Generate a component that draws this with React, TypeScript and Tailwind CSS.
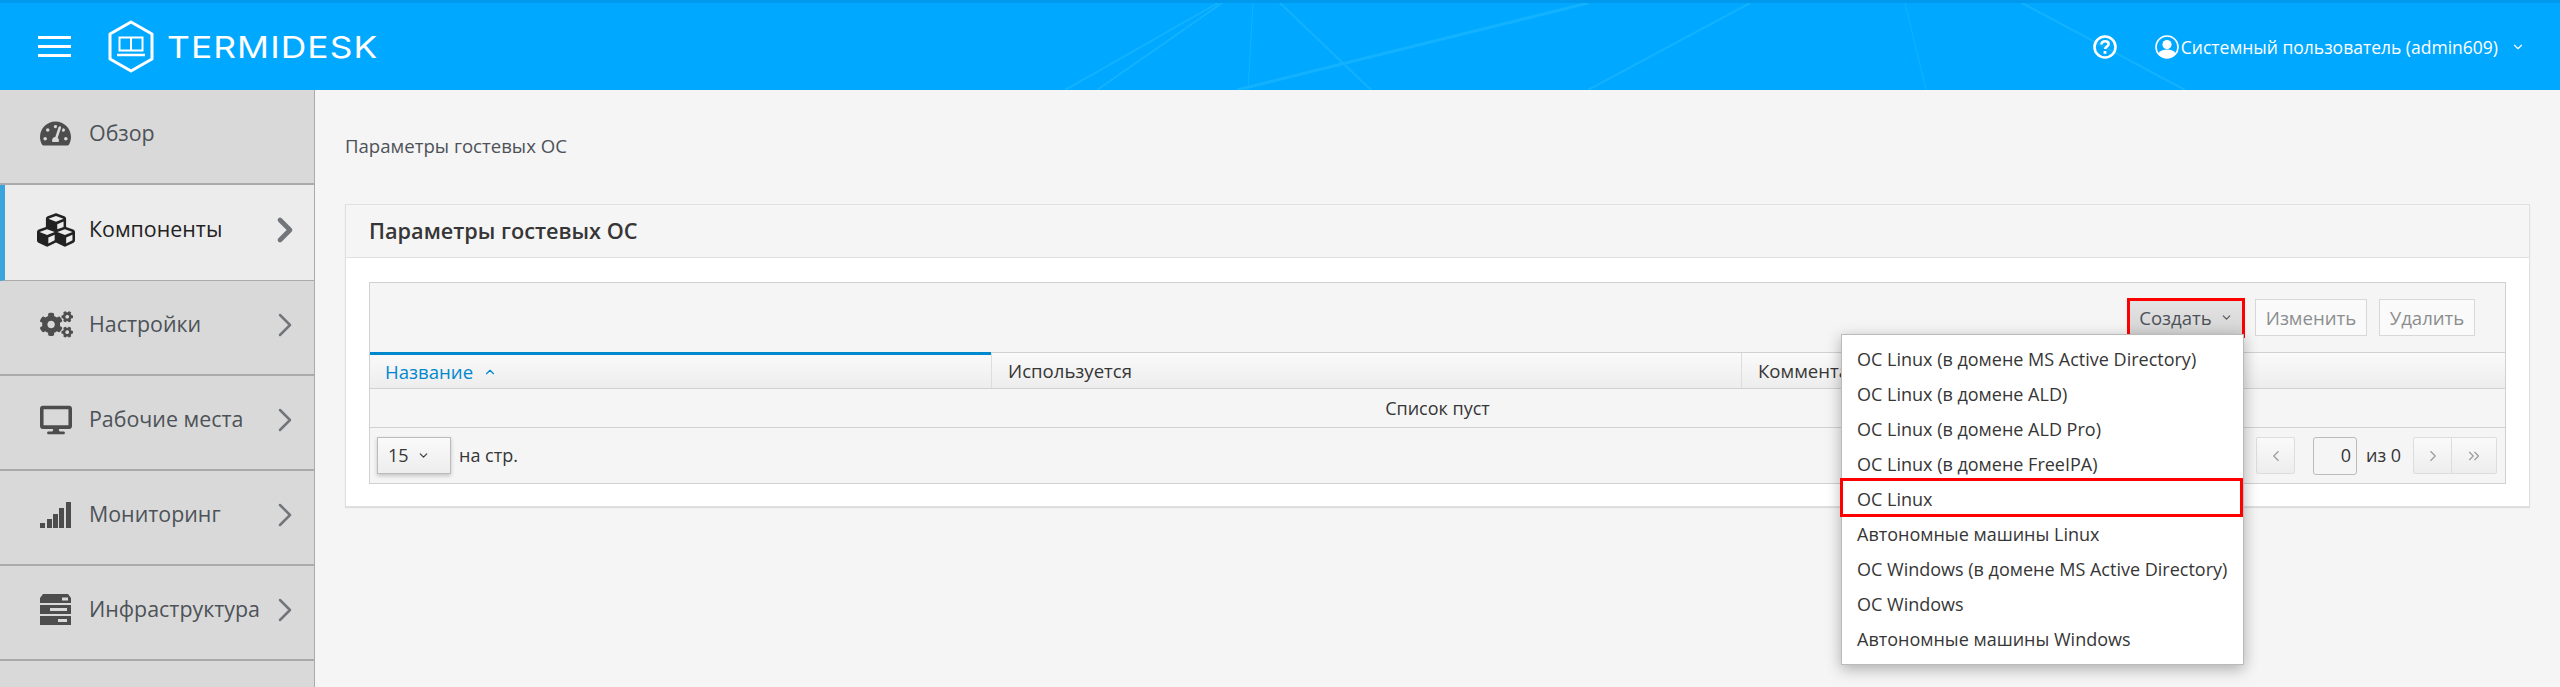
import React from 'react';
import { FaCogs, FaCubes, FaDesktop, FaTachometerAlt } from 'react-icons/fa';
import { ChevronDown, ChevronLeft, ChevronRight, ChevronUp, ChevronsRight } from 'lucide-react';

const SignalIcon = () => (
  <svg width="31" height="26" viewBox="0 0 31 26" fill="currentColor">
    <rect x="0" y="21" width="5" height="5" />
    <rect x="7" y="17" width="5" height="9" />
    <rect x="13" y="12" width="5" height="14" />
    <rect x="19" y="6" width="5" height="20" />
    <rect x="26" y="0" width="5" height="26" />
  </svg>
);

const ServerIcon = () => (
  <svg width="31" height="31" viewBox="0 0 31 31" fill="currentColor">
    <path d="M3 0h25l3 4v5H0V4z" />
    <path fillRule="evenodd" d="M0 11h31v9H0zM10 14v3h17v-3z" />
    <path fillRule="evenodd" d="M0 22h31v9H0zM18 25v3h9v-3z" />
    <rect x="22" y="3.5" width="6" height="3" fill="#d9d9d9" />
  </svg>
);

const Logo = () => (
  <svg width="48" height="53" viewBox="0 0 48 53" fill="none" stroke="white">
    <path d="M24 2 L45 14 V39 L24 51 L3 39 V14 Z" strokeWidth="3" strokeLinejoin="round" />
    <rect x="12.5" y="17.5" width="23" height="13" strokeWidth="2" />
    <path d="M24 17v13" strokeWidth="2" />
    <path d="M10 35h28" strokeWidth="2.5" />
  </svg>
);

const UserIcon = () => (
  <svg width="24" height="24" viewBox="0 0 24 24">
    <circle cx="12" cy="12" r="11" fill="none" stroke="white" strokeWidth="1.6" />
    <circle cx="12" cy="9.5" r="4.6" fill="white" />
    <path d="M3.5 18.5c1.5-3 4.5-4 8.5-4s7 1 8.5 4C18.5 21.5 15.5 23 12 23s-6.500-1.500-8.500-4.500z" fill="white" />
  </svg>
);

const HelpIcon = () => (
  <svg width="24" height="24" viewBox="0 0 24 24" fill="none" stroke="white">
    <circle cx="12" cy="12" r="10.500" strokeWidth="2.600" />
    <path d="M8.500 9.500c0-2.200 1.500-3.300 3.600-3.300s3.500 1.100 3.500 2.900c0 2.600-3.500 2.500-3.500 5" strokeWidth="2.600" />
    <rect x="10.600" y="16" width="2.800" height="2.800" fill="white" stroke="none" />
  </svg>
);

const navItems = [
  { label: 'Обзор', icon: <FaTachometerAlt size={31} />, arrow: false },
  { label: 'Компоненты', icon: <FaCubes size={38} />, arrow: true, active: true },
  { label: 'Настройки', icon: <FaCogs size={33} />, arrow: true },
  { label: 'Рабочие места', icon: <FaDesktop size={32} />, arrow: true },
  { label: 'Мониторинг', icon: <SignalIcon />, arrow: true },
  { label: 'Инфраструктура', icon: <ServerIcon />, arrow: true },
];

const menuItems = [
  'ОС Linux (в домене MS Active Directory)',
  'ОС Linux (в домене ALD)',
  'ОС Linux (в домене ALD Pro)',
  'ОС Linux (в домене FreeIPA)',
  'ОС Linux',
  'Автономные машины Linux',
  'ОС Windows (в домене MS Active Directory)',
  'ОС Windows',
  'Автономные машины Windows',
];

const Header = () => (
  <header className="relative h-[90px] shrink-0 overflow-hidden border-t-[3px] border-[#0099ee] bg-[#00a8ff] text-white">
    <svg className="absolute inset-0" width="2560" height="87" fill="none" stroke="#12b2ff" strokeWidth="2">
      <path d="M1218 0L1065 87M1222 0L1097 87" />
      <path d="M1253 0L1248 87" strokeWidth="1" />
      <path d="M1280 0L1371 87" />
      <path d="M1588 0L1237 87" strokeWidth="3" />
      <path d="M1750 0L1588 87" />
      <path d="M1905 0L1926 87" strokeWidth="1" />
      <path d="M2022 0L2185 87" />
    </svg>
    <div className="relative flex h-full items-center pl-[38px] pr-[35px]">
      <div className="mr-[36px] flex w-[33px] flex-col gap-[6px]">
        <div className="h-[3px] bg-white" />
        <div className="h-[3px] bg-white" />
        <div className="h-[3px] bg-white" />
      </div>
      <Logo />
      <span className="ml-[12px] origin-left scale-x-[1.18] font-['Inter'] text-[30px] leading-none tracking-[0.9px]">TERMIDESK</span>
      <div className="ml-auto flex items-center">
        <HelpIcon />
        <div className="ml-[38px]"><UserIcon /></div>
        <span className="ml-[2px] text-[17.5px] leading-[28px]">Системный пользователь (admin609)</span>
        <ChevronDown className="ml-[13px]" size={14} />
      </div>
    </div>
  </header>
);

const Sidebar = () => (
  <nav className="w-[315px] shrink-0 border-r border-[#aaaaaa] bg-[#d9d9d9]">
    {navItems.map((item) => (
      <div
        key={item.label}
        className={
          item.active
            ? 'flex h-[96px] items-center border-b border-[#aaaaaa] border-l-[5px] border-l-[#39a5dc] bg-[#ececec] pb-[6px] pl-[32px] pr-[9px] text-[#222222]'
            : 'flex h-[95px] items-center border-b-2 border-[#aaaaaa] pb-[6px] pl-[40px] pr-[9px] text-[#4d5258]'
        }
      >
        <div className={item.active ? 'flex w-[52px] justify-start text-[#222222]' : 'flex w-[49px] justify-start text-[#4d4d4d]'}>{item.icon}</div>
        <span className={item.active ? 'text-[21.4px] font-medium' : 'text-[21.4px]'}>{item.label}</span>
        {item.arrow && (
          <ChevronRight className="ml-auto text-[#72767b]" size={40} strokeWidth={item.active ? 2.800 : 1.500} />
        )}
      </div>
    ))}
  </nav>
);

const Dropdown = () => (
  <div className="absolute left-[1471px] top-[-19px] z-10 w-[403px] border border-[#bbbbbb] bg-white py-[7px] text-[18px] text-[#363636] shadow-[0_4px_14px_rgba(0,0,0,0.3)]">
    {menuItems.map((item) => (
      <div key={item} className="relative flex h-[35px] items-center whitespace-nowrap pl-[15px]">
        {item}
        {item === 'ОС Linux' && (
          <span className="absolute -left-[2px] -top-[4px] bottom-0 right-0 border-[3px] border-[#ff0000]" />
        )}
      </div>
    ))}
  </div>
);

const Toolbar = () => (
  <div className="relative flex h-[69px] items-center justify-end pr-[30px] text-[18.6px]">
    <button className="flex h-[40px] w-[118px] items-center justify-center gap-[8px] border-[3px] border-[#ff0000] bg-gradient-to-b from-[#e4e4e4] to-[#d4d4d4] font-medium text-[#4d5258]">
      Создать <ChevronDown size={13} />
    </button>
    <button className="ml-[10px] h-[37px] w-[112px] border border-[#d8d8d8] bg-[#fafafa] text-[#8b8d8f]">Изменить</button>
    <button className="ml-[12px] h-[37px] w-[96px] border border-[#d8d8d8] bg-[#fafafa] text-[#8b8d8f]">Удалить</button>
  </div>
);

const TableHead = () => (
  <div className="flex h-[37px] border-y border-[#d1d1d1] bg-gradient-to-b from-[#fafafa] to-[#ededed] text-[18.6px] text-[#363636]">
    <div className="-mt-px flex w-[621px] items-center gap-[10px] border-t-[3px] border-[#0088ce] pl-[15px] text-[#0088ce]">
      Название <ChevronUp size={14} />
    </div>
    <div className="flex w-[750px] items-center border-l border-[#dddddd] pl-[16px]">Используется</div>
    <div className="flex flex-1 items-center border-l border-[#dddddd] pl-[16px]">Комментарий</div>
  </div>
);

const Pagination = () => (
  <div className="flex h-[56px] items-center border-t border-[#d1d1d1] pl-[7px] pr-[8px] text-[18px] text-[#363636]">
    <div className="flex h-[37px] w-[74px] items-center gap-[8px] border border-[#bbbbbb] bg-gradient-to-b from-[#fafafa] to-[#ededed] pl-[10px] shadow-[0_2px_4px_rgba(0,0,0,0.2)]">
      15 <ChevronDown size={13} />
    </div>
    <span className="ml-[8px]">на стр.</span>
    <div className="ml-auto flex h-[37px] w-[39px] items-center justify-center rounded-[2px] border border-[#dddddd] bg-gradient-to-b from-[#fafafa] to-[#ededed] text-[#999999]">
      <ChevronLeft size={18} strokeWidth={1.500} />
    </div>
    <div className="ml-[18px] flex h-[38px] w-[44px] items-center justify-end rounded-[3px] border border-[#bbbbbb] pr-[5px]">0</div>
    <span className="ml-[9px] w-[41px] whitespace-nowrap">из 0</span>
    <div className="ml-[6px] flex h-[37px] rounded-[2px] border border-[#dddddd] bg-gradient-to-b from-[#fafafa] to-[#ededed] text-[#999999]">
      <div className="flex w-[38px] items-center justify-center border-r border-[#dddddd]">
        <ChevronRight size={18} strokeWidth={1.500} />
      </div>
      <div className="flex w-[44px] items-center justify-center">
        <ChevronsRight size={18} strokeWidth={1.500} />
      </div>
    </div>
  </div>
);

export default function App() {
  return (
    <div className="flex h-[687px] flex-col overflow-hidden bg-[#f5f5f5] font-['Open_Sans',sans-serif]">
      <Header />
      <div className="flex flex-1 overflow-hidden">
        <Sidebar />
        <main className="flex-1 pl-[30px] pr-[30px] pt-[45px]">
          <div className="mb-[47px] h-[22px] text-[18.6px] leading-[22px] text-[#4d5258]">Параметры гостевых ОС</div>
          <section className="border border-[#e0e0e0] bg-white shadow-[0_1px_1px_rgba(0,0,0,0.1)]">
            <h2 className="flex h-[53px] items-center border-b border-[#e0e0e0] bg-[#f5f5f5] pl-[23px] text-[21.7px] font-semibold text-[#363636]">
              Параметры гостевых ОС
            </h2>
            <div className="px-[23px] pb-[22px] pt-[24px]">
              <div className="relative border border-[#d1d1d1] bg-[#f5f5f5]">
                <Toolbar />
                <TableHead />
                <div className="flex h-[38px] items-center justify-center text-[18px] text-[#363636]">Список пуст</div>
                <Pagination />
                <div className="absolute left-0 top-[70px]"><div className="relative"><Dropdown /></div></div>
              </div>
            </div>
          </section>
        </main>
      </div>
    </div>
  );
}
